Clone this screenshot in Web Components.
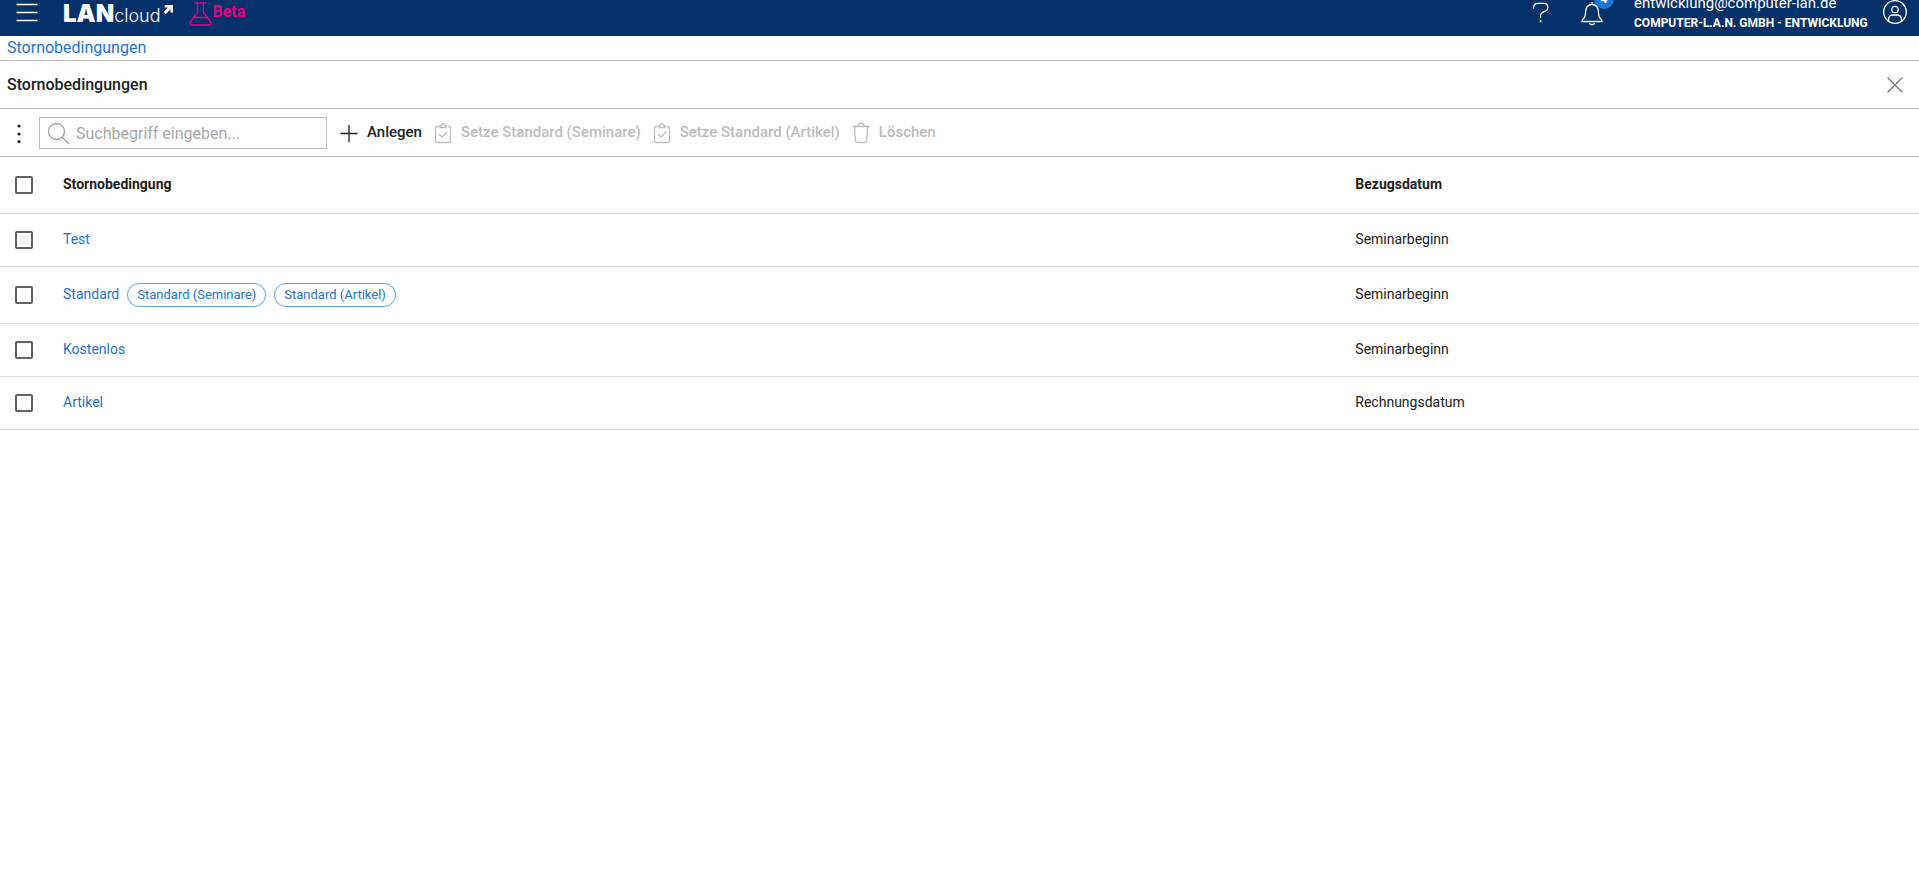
<!DOCTYPE html>
<html lang="de">
<head>
<meta charset="utf-8">
<meta name="viewport" content="width=device-width, initial-scale=1">
<title>LANcloud – Stornobedingungen</title>
<style>
  :root {
    --navy: #04316a;
    --blue: #2573d0;
    --pink: #e6007e;
    --line: #bdbdbd;
    --line-soft: #e0e0e0;
    --ink: #212121;
    --muted: #bdbdbd;
  }
  body { margin: 0; background: #fff; color: var(--ink); font: 14px/20px Roboto, sans-serif; }
</style>
</head>
<body>
<storno-page></storno-page>

<script>
const define = (name, html, setup) => {
  const template = document.createElement('template');
  template.innerHTML = html;
  customElements.define(name, class extends HTMLElement {
    constructor() {
      super();
      this.attachShadow({ mode: 'open' }).append(template.content.cloneNode(true));
    }
    connectedCallback() { if (setup) setup(this, this.shadowRoot); }
  });
};

const ICONS = {
  menu: [28, '<path d="M5 5.500h20M5 13.500h20M5 21.500h20" />'],
  flask: [24, '<path d="M7 2h11M9.500 2.500v9L2.500 20.500q-1.500 3.500 2 3.500h16q3.500 0 2-3.500l-7-9v-9M6.500 16.500h12"/>'],
  help: [24, '<path d="M4 7V6q0-4.500 4.500-4.500H15q4.500 0 4.500 4.500 0 3-4 4.500-4 1.500-4 4.500v2"/><path d="M11.500 20.500v.5" stroke-width="2"/>'],
  bell: [24, '<path d="M12 1.500v2M2 20.500h20M2 20.500q0-2 2-3.500 1.500-1.500 1.500-5 0-8.500 6.500-8.500t6.500 8.500q0 3.500 1.500 5 2 1.500 2 3.500M9.500 22.500q2.500 2.500 5 0"/>'],
  user: [24, '<circle cx="12" cy="11" r="11.300"/><circle cx="12" cy="8.500" r="3.200"/><path d="M5.500 19.500q0-5.500 4-5.500h5q4 0 4 5.500"/>'],
  close: [16, '<path d="M1 1l14 14M15 1L1 15"/>'],
  dots: [24, '<g fill="currentColor" stroke="none"><circle cx="12" cy="5" r="1.600"/><circle cx="12" cy="13" r="1.600"/><circle cx="12" cy="20.500" r="1.600"/></g>'],
  search: [24, '<circle cx="10.500" cy="10.500" r="8"/><path d="M16.500 16.500l6 6"/>'],
  plus: [20, '<path d="M2 10.500h16M10 2.500v16"/>'],
  clip: [20, '<path d="M5 3.500H4Q2.500 3.500 2.500 5v13q0 1.500 1.500 1.500h12q1.500 0 1.500-1.500V5q0-1.500-1.500-1.500h-1M7 4.500v-2h1.500Q8.500.5 10 .5t1.500 2H13v2zM6.500 11.500l2.500 2.500 5-5"/>'],
  bin: [20, '<path d="M2 3.500h16M7 3q0-2.500 2-2.500h2q2 0 2 2.500M3.500 4l1 14q.2 1.500 1.500 1.500h8q1.300 0 1.500-1.500l1-14"/>'],
  arrow: [12, '<path fill="currentColor" stroke="none" d="M2 0h10v9H9V5L3 11 1 8l5-5H2z"/>']
};

define('ui-icon', `
  <style>
    :host { display: block; flex: none; }
    svg { display: block; overflow: visible; fill: none; stroke: currentColor; stroke-width: 1.3; stroke-linecap: round; stroke-linejoin: round; }
  </style>
  <svg aria-hidden="true"></svg>`,
  (host, root) => {
    const [box, shapes] = ICONS[host.getAttribute('name')];
    const svg = root.querySelector('svg');
    const size = host.getAttribute('size') || box;
    svg.setAttribute('viewBox', `0 0 ${box} ${box}`);
    svg.setAttribute('width', size);
    svg.setAttribute('height', size);
    svg.innerHTML = shapes;
  });

define('app-header', `
  <style>
    :host { display: flex; align-items: flex-end; height: 36px; overflow: hidden; background: var(--navy); color: #fff; }
    header { display: flex; align-items: center; flex: 1; height: 46px; padding: 0 12px; }
    button { display: block; padding: 0; border: 0; background: none; color: inherit; font: inherit; cursor: pointer; }
    .menu { margin-right: 23px; }
    .logo { display: flex; align-items: baseline; padding-top: 3px; color: inherit; text-decoration: none; }
    .logo b { font: 900 24px/24px Inter, sans-serif; }
    .logo span { font: 300 18px/24px Inter, sans-serif; }
    .logo ui-icon { align-self: flex-start; margin: 3px 0 0 2px; }
    .beta { display: flex; align-items: center; gap: 1px; margin-left: 15px; color: var(--pink); font-size: 16px; font-weight: 700; line-height: 24px; }
    .beta span { padding-bottom: 2px; }
    .space { flex: 1; }
    .bell { position: relative; margin: 0 30px 0 28px; }
    .badge { position: absolute; left: 14px; top: -12px; width: 20px; height: 20px; border-radius: 10px; background: #1976d2; font-size: 12px; font-weight: 700; line-height: 20px; text-align: center; }
    .account { min-width: 237px; margin-right: 12px; line-height: 20px; }
    .mail { font-size: 15px; }
    .org { font-size: 12px; font-weight: 700; text-transform: uppercase; }
  </style>
  <header>
    <button class="menu" aria-label="Menü"><ui-icon name="menu"></ui-icon></button>
    <a class="logo" href="#"><b>LAN</b><span>cloud</span><ui-icon name="arrow" size="10"></ui-icon></a>
    <div class="beta"><ui-icon name="flask"></ui-icon><span>Beta</span></div>
    <div class="space"></div>
    <button aria-label="Hilfe"><ui-icon name="help" size="22"></ui-icon></button>
    <button class="bell" aria-label="Benachrichtigungen"><ui-icon name="bell"></ui-icon><span class="badge">4</span></button>
    <div class="account">
      <div class="mail">entwicklung@computer-lan.de</div>
      <div class="org">Computer-L.A.N. GmbH - Entwicklung</div>
    </div>
    <button aria-label="Konto"><ui-icon name="user"></ui-icon></button>
  </header>`);

define('bread-crumb', `
  <style>
    :host { display: block; padding: 0 7px; border-bottom: 1px solid var(--line); font-size: 16px; line-height: 24px; }
    ::slotted(a) { color: var(--blue); text-decoration: none; }
  </style>
  <nav aria-label="Brotkrumen"><slot></slot></nav>`);

define('title-bar', `
  <style>
    :host { display: flex; align-items: center; justify-content: space-between; height: 47px; padding: 0 16px 0 7px; border-bottom: 1px solid var(--line); }
    h1 { margin: 0; font-size: 16px; font-weight: 500; line-height: 24px; }
    button { padding: 0; border: 0; background: none; color: #757575; cursor: pointer; }
  </style>
  <h1><slot></slot></h1>
  <button aria-label="Schließen"><ui-icon name="close"></ui-icon></button>`);

define('search-box', `
  <style>
    :host { display: block; }
    label { display: flex; align-items: center; gap: 6px; box-sizing: border-box; width: 288px; height: 32px; padding: 0 6px; border: 1px solid var(--line); color: #9e9e9e; }
    input { flex: 1; min-width: 0; height: 24px; padding: 2px 0 0; border: 0; outline: 0; background: none; color: var(--ink); font: 16px/24px Roboto, sans-serif; }
    input::placeholder { color: #a8a8a8; opacity: 1; }
  </style>
  <label><ui-icon name="search"></ui-icon><input type="text" aria-label="Suchbegriff" placeholder="Suchbegriff eingeben..."></label>`);

define('tool-button', `
  <style>
    :host { display: block; }
    button { display: flex; align-items: center; gap: 8px; padding: 0; border: 0; background: none; color: var(--ink); font: 500 15px/20px Roboto, sans-serif; white-space: nowrap; cursor: pointer; }
    button:disabled { color: var(--muted); cursor: default; }
    span { padding-bottom: 2px; }
  </style>
  <button><slot name="icon"></slot><span><slot></slot></span></button>`,
  (host, root) => {
    root.querySelector('button').disabled = host.hasAttribute('disabled');
  });

define('tool-bar', `
  <style>
    :host { display: flex; align-items: center; height: 47px; padding: 0 7px; border-bottom: 1px solid var(--line); }
    .more { margin-right: 8px; padding: 0; border: 0; background: none; color: var(--ink); }
    .tools { display: flex; gap: 11px; margin-left: 12px; }
  </style>
  <button class="more" aria-label="Mehr"><ui-icon name="dots"></ui-icon></button>
  <search-box></search-box>
  <div class="tools">
    <tool-button><ui-icon slot="icon" name="plus"></ui-icon>Anlegen</tool-button>
    <tool-button disabled><ui-icon slot="icon" name="clip"></ui-icon>Setze Standard (Seminare)</tool-button>
    <tool-button disabled><ui-icon slot="icon" name="clip"></ui-icon>Setze Standard (Artikel)</tool-button>
    <tool-button disabled><ui-icon slot="icon" name="bin"></ui-icon>Löschen</tool-button>
  </div>`);

define('ui-chip', `
  <style>
    :host { display: inline-block; margin-left: 8px; padding: 0 9px; border: 1px solid #64a2e0; border-radius: 12px; color: var(--blue); font-size: 13px; line-height: 22px; }
  </style>
  <slot></slot>`);

const ROWS = [
  ['Test', [], 'Seminarbeginn'],
  ['Standard', ['Standard (Seminare)', 'Standard (Artikel)'], 'Seminarbeginn'],
  ['Kostenlos', [], 'Seminarbeginn'],
  ['Artikel', [], 'Rechnungsdatum']
];

define('storno-table', `
  <style>
    :host { display: block; }
    table { width: 100%; table-layout: fixed; border-collapse: separate; border-spacing: 0; }
    .pick { width: 48px; }
    .date { width: 30%; }
    th, td { padding: 15px 12px 17px 15px; border-bottom: 1px solid var(--line-soft); text-align: left; font-weight: 400; line-height: 20px; vertical-align: middle; }
    .tagged td:nth-child(2) { padding-top: 16px; padding-bottom: 16px; }
    th:last-child, td:last-child { padding-left: 12px; }
    th { padding-top: 17px; padding-bottom: 19px; font-weight: 700; }
    input { appearance: none; display: block; box-sizing: border-box; width: 18px; height: 18px; margin: 2px 0 0; border: 2px solid #616161; border-radius: 2px; background: #fff; }
    input:checked { background: var(--blue); border-color: var(--blue); }
    a { color: var(--blue); text-decoration: none; }
    .name { display: flex; align-items: center; }
    .tagged a { padding-bottom: 2px; }
  </style>
  <table>
    <colgroup><col class="pick"><col><col class="date"></colgroup>
    <thead><tr><th><input type="checkbox" aria-label="Alle auswählen"></th><th scope="col">Stornobedingung</th><th scope="col">Bezugsdatum</th></tr></thead>
    <tbody></tbody>
  </table>`,
  (host, root) => {
    root.querySelector('tbody').innerHTML = ROWS.map(([name, chips, date]) => `
      <tr class="${chips.length ? 'tagged' : ''}">
        <td><input type="checkbox" aria-label="${name} auswählen"></td>
        <td><div class="name"><a href="#">${name}</a>${chips.map(c => `<ui-chip>${c}</ui-chip>`).join('')}</div></td>
        <td>${date}</td>
      </tr>`).join('');
  });

define('storno-page', `
  <style>:host { display: block; }</style>
  <app-header></app-header>
  <bread-crumb><a href="#">Stornobedingungen</a></bread-crumb>
  <main>
    <title-bar>Stornobedingungen</title-bar>
    <tool-bar></tool-bar>
    <storno-table></storno-table>
  </main>`);
</script>
</body>
</html>
